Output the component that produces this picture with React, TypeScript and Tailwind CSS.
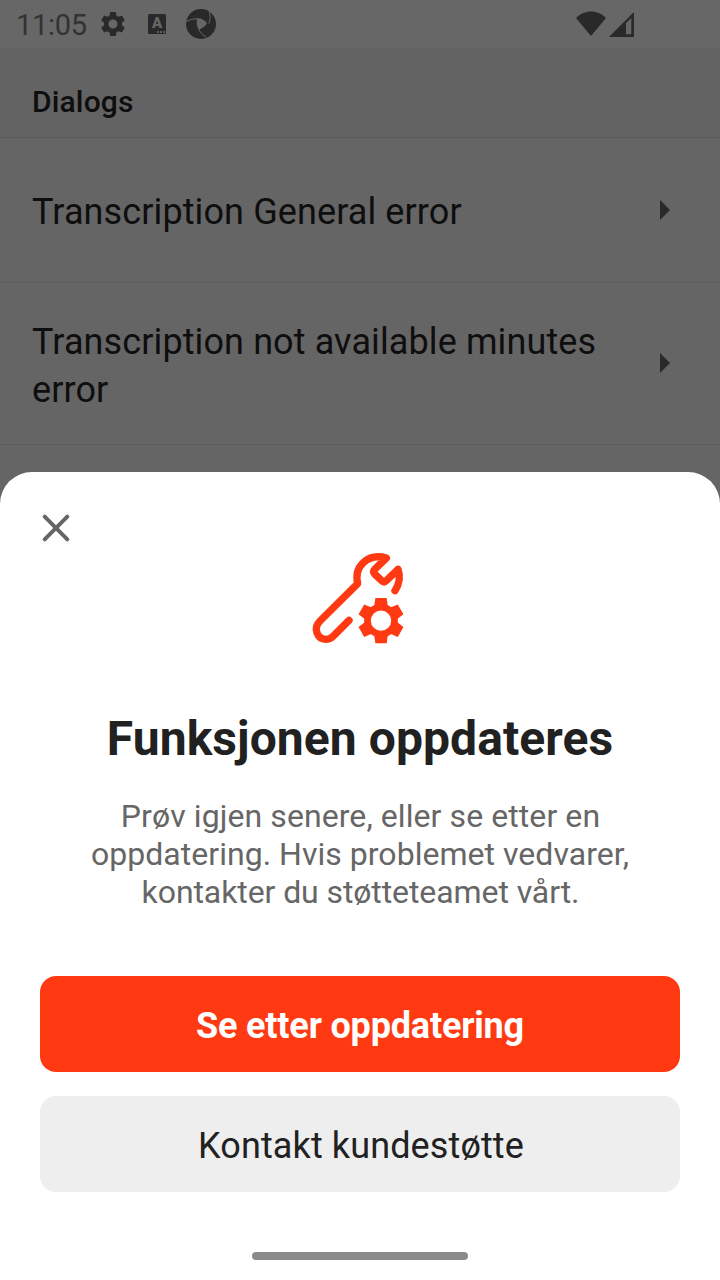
const gearAngles = [0, 60, 120, 180, 240, 300];

function SettingsIcon() {
  return (
    <svg className="h-[30px] w-[30px]" viewBox="0 0 24 24" fill="#292929">
      <path d="M19.14 12.94c.04-.3.06-.61.06-.94s-.02-.64-.07-.94l2.03-1.58c.18-.14.23-.41.12-.61l-1.92-3.32c-.12-.22-.37-.29-.59-.22l-2.39.96c-.5-.38-1.03-.7-1.62-.94l-.36-2.54c-.04-.24-.24-.41-.48-.41h-3.84c-.24 0-.43.17-.47.41l-.36 2.54c-.59.24-1.13.57-1.62.94l-2.39-.96c-.22-.08-.47 0-.59.22L2.74 8.87c-.12.21-.08.47.12.61l2.03 1.58c-.05.3-.09.63-.09.94s.02.64.07.94l-2.03 1.58c-.18.14-.23.41-.12.61l1.92 3.32c.12.22.37.29.59.22l2.39-.96c.5.38 1.03.7 1.62.94l.36 2.54c.05.24.24.41.48.41h3.84c.24 0 .44-.17.47-.41l.36-2.54c.59-.24 1.13-.56 1.62-.94l2.39.96c.22.08.47 0 .59-.22l1.92-3.32c.12-.22.07-.47-.12-.61l-2.01-1.58zM12 15.6A3.6 3.6 0 1 1 12 8.400a3.6 3.6 0 0 1 0 7.200z" />
    </svg>
  );
}

function KeyboardBadge() {
  return (
    <div className="relative flex h-5 w-[18px] justify-center rounded-[1.500px] bg-[#292929] text-[15px] leading-[19px] font-black text-[#666]">
      A
      <div className="absolute right-[1px] bottom-[1px] flex gap-[1px]">
        <span className="h-[2px] w-[2px] bg-[#5c5c5c]" />
        <span className="h-[2px] w-[2px] bg-[#5c5c5c]" />
        <span className="h-[2px] w-[2px] bg-[#5c5c5c]" />
      </div>
    </div>
  );
}

function ApertureIcon() {
  return (
    <svg className="h-[30px] w-[30px]" viewBox="0 0 90 90">
      <circle cx="45" cy="45" r="45" fill="#292929" />
      <g fill="none" stroke="#666" strokeWidth="3">
        <path d="M0 38Q14 29 34 29" />
        <path d="M70 7Q76 26 69 44" />
        <path d="M34 29Q30 49 41 66Q48 78 60 84" />
      </g>
      <path d="M33 28Q51 27 63 42Q58 54 38 62Q31 47 33 28Z" fill="#666" />
    </svg>
  );
}

function WifiIcon() {
  return (
    <svg className="h-[26px] w-[30px]" viewBox="0 0 30 26" fill="#292929">
      <path d="M0 7C8-1.700 22-1.700 30 7L15 25Z" />
    </svg>
  );
}

function SignalIcon() {
  return (
    <svg className="h-[25px] w-[25px]" viewBox="0 0 25 25">
      <path d="M25 0V25H0Z" fill="#292929" />
      <path d="M22.300 6V22.300H17V11Z" fill="#666" />
    </svg>
  );
}

function ListRow({ label, className }: { label: string; className: string }) {
  return (
    <div className={`flex items-center justify-between border-b border-[#5c5c5c] pr-[50px] pl-8 ${className}`}>
      <span className="w-[590px] text-[36px] leading-[48px] tracking-[0.11px] text-[#0e0e0e]">{label}</span>
      <svg className="h-5 w-[10px]" viewBox="0 0 10 20" fill="#292929">
        <path d="M0 0L10 10L0 20Z" />
      </svg>
    </div>
  );
}

function RepairIcon() {
  return (
    <svg className="h-[120px] w-[120px]" viewBox="0 0 360 360">
      <path
        d="M285 152C298 132 301 108 294 88L259 122Q252 129 245 122L224 102Q217 95 224 88L259 54C205 38 161 78 173 131L60 243C38 265 52 297 77 298C86 298 93 295 99 289L147 241"
        fill="none"
        stroke="#ff3a12"
        strokeWidth="22"
        strokeLinecap="round"
        strokeLinejoin="round"
      />
      <circle cx="243" cy="242" r="40.500" fill="none" stroke="#ff3a12" strokeWidth="20" />
      {gearAngles.map((angle) => (
        <path
          key={angle}
          d="M226 174H260L263 196L274 207H212L223 196Z"
          transform={`rotate(${angle} 243 242)`}
          fill="#ff3a12"
        />
      ))}
    </svg>
  );
}

export default function App() {
  return (
    <div className="relative h-[1280px] w-[720px] overflow-hidden bg-[#656565] font-['Roboto',sans-serif]">
      <header className="flex h-12 items-center bg-[#676767] pl-4">
        <span className="w-[82px] pt-[3px] text-[29px] leading-none tracking-[-0.3px] text-[#333]">11:05</span>
        <SettingsIcon />
        <div className="ml-5">
          <KeyboardBadge />
        </div>
        <div className="ml-5">
          <ApertureIcon />
        </div>
        <div className="ml-auto flex items-center gap-[3px] pr-[86px]">
          <WifiIcon />
          <SignalIcon />
        </div>
      </header>
      <div className="flex h-[90px] items-center border-b border-[#5c5c5c] bg-[#636363] pt-[18px] pl-8 text-[30px] font-medium tracking-[0.15px] text-[#0e0e0e]">
        Dialogs
      </div>
      <ListRow label="Transcription General error" className="h-[145px] [&>span]:pt-1" />
      <ListRow
        label="Transcription not available minutes error"
        className="h-[162px] pb-[1px] [&>span]:pt-[5px]"
      />

      <section className="absolute inset-x-0 bottom-0 flex h-[808px] flex-col items-center rounded-t-[32px] bg-white px-10 pt-[68px]">
        <button className="absolute top-10 left-10 flex h-8 w-8 items-center justify-center" aria-label="Lukk">
          <svg className="h-8 w-8" viewBox="0 0 32 32" stroke="#666" strokeWidth="4" strokeLinecap="round">
            <path d="M4.700 4.700L27.300 27.300M27.300 4.700L4.700 27.300" />
          </svg>
        </button>
        <RepairIcon />
        <h1 className="mt-[51px] text-[48px] leading-[56px] font-bold tracking-[0.07px] text-[#212121]">
          Funksjonen oppdateres
        </h1>
        <p className="mt-[30px] flex flex-col items-center text-[32px] leading-[38px] text-[#666]">
          <span className="pl-[1px] tracking-[0.08px]">Prøv igjen senere, eller se etter en </span>
          <span className="tracking-[0.03px]">oppdatering. Hvis problemet vedvarer, </span>
          <span className="pl-[1px] tracking-[-0.09px]">kontakter du støtteteamet vårt.</span>
        </p>
        <button className="mt-[65px] h-24 w-full shrink-0 rounded-2xl bg-[#ff3a12] pt-[3px] text-[36px] font-bold tracking-[-0.17px] text-white">
          Se etter oppdatering
        </button>
        <button className="mt-6 h-24 w-full shrink-0 rounded-2xl bg-[#eee] pt-[3px] pl-[2px] text-[36px] tracking-[0.12px] text-[#212121]">
          Kontakt kundestøtte
        </button>
        <div className="mt-[60px] h-2 w-[216px] shrink-0 rounded-full bg-[#8a8a8a]" />
      </section>
    </div>
  );
}
